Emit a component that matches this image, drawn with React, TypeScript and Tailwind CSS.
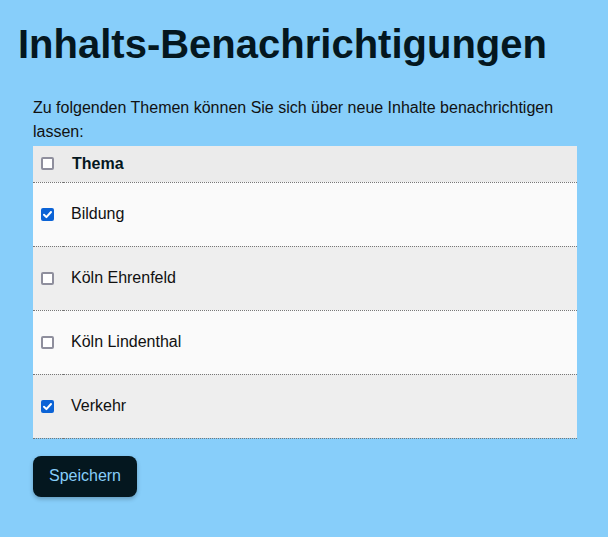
import React, { useState } from "react";

interface Topic {
  name: string;
  checked: boolean;
}

const initialTopics: Topic[] = [
  { name: "Bildung", checked: true },
  { name: "Köln Ehrenfeld", checked: false },
  { name: "Köln Lindenthal", checked: false },
  { name: "Verkehr", checked: true },
];

function Checkbox({ checked, onChange }: { checked: boolean; onChange: () => void }) {
  return (
    <button
      type="button"
      role="checkbox"
      aria-checked={checked}
      onClick={onChange}
      className={`flex items-center justify-center w-[13px] h-[13px] rounded-[2px] ${
        checked ? "bg-[#0b63d6]" : "bg-white border-2 border-[#8f8f9d]"
      }`}
    >
      {checked && (
        <svg viewBox="0 0 13 13" className="w-[13px] h-[13px]">
          <path d="M3 6.8 L5.4 9.1 L10 4" fill="none" stroke="white" strokeWidth="2" strokeLinecap="round" strokeLinejoin="round" />
        </svg>
      )}
    </button>
  );
}

export default function App() {
  const [topics, setTopics] = useState(initialTopics);

  const allChecked = topics.every((t) => t.checked);

  const toggle = (index: number) => {
    setTopics(topics.map((t, i) => (i === index ? { ...t, checked: !t.checked } : t)));
  };

  const toggleAll = () => {
    setTopics(topics.map((t) => ({ ...t, checked: !allChecked })));
  };

  return (
    <div className="min-h-[537px] bg-[#87cefa] text-[#04171f] font-['Liberation_Sans',Arial,sans-serif]">
      <div className="pl-[18px] pr-[31px] pt-[20px]">
        <h1 className="text-[40px] font-bold leading-[48px]">Inhalts-Benachrichtigungen</h1>
        <div className="pl-[15px] pt-[28px]">
          <p className="text-[16px] leading-[24px] text-[#111]">
            Zu folgenden Themen können Sie sich über neue Inhalte benachrichtigen lassen:
          </p>
          <table className="w-full border-collapse mt-[2px]">
            <thead>
              <tr className="bg-[#ebebeb] h-[36px] border-b border-dotted border-[#777]">
                <th className="w-[30px] pl-[8px] text-left">
                  <Checkbox checked={allChecked} onChange={toggleAll} />
                </th>
                <th className="text-left text-[16px] font-bold pl-[9px]">Thema</th>
              </tr>
            </thead>
            <tbody>
              {topics.map((topic, index) => (
                <tr
                  key={topic.name}
                  className={`h-[64px] border-b border-dotted border-[#777] ${
                    index % 2 === 0 ? "bg-[#fafafa]" : "bg-[#eeeeee]"
                  }`}
                >
                  <td className="pl-[8px]">
                    <Checkbox checked={topic.checked} onChange={() => toggle(index)} />
                  </td>
                  <td className="pl-[8px] text-[16px] text-[#111]">{topic.name}</td>
                </tr>
              ))}
            </tbody>
          </table>
          <button className="mt-[17px] h-[41px] w-[104px] rounded-[8px] bg-[#04171f] text-[#87cefa] text-[16px] shadow-[0_2px_4px_rgba(0,0,0,0.25)]">
            Speichern
          </button>
        </div>
      </div>
    </div>
  );
}
